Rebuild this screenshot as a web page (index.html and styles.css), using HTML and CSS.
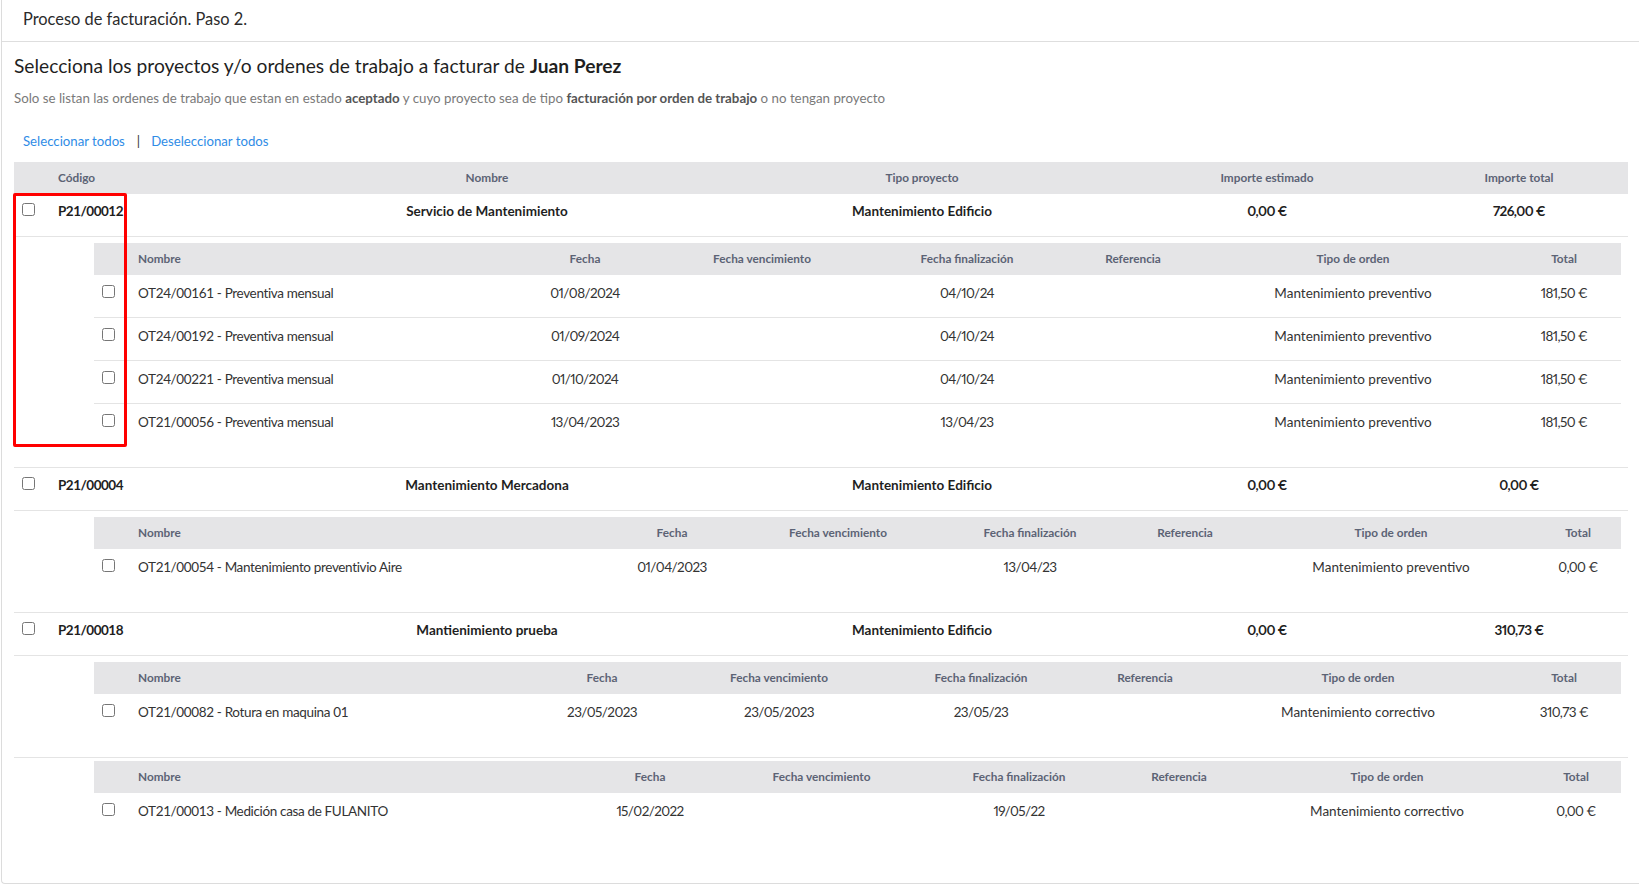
FILE: index.html
```html
<!DOCTYPE html>
<html lang="es">
<head>
<meta charset="utf-8">
<title>Proceso de facturación. Paso 2.</title>
<link rel="stylesheet" href="styles.css">
</head>
<body>
<div class="card">
  <div class="card-header">Proceso de facturación. Paso 2.</div>
  <div class="card-body">
    <h4 class="title">Selecciona los proyectos y/o ordenes de trabajo a facturar de <b>Juan Perez</b></h4>
    <p class="hint">Solo se listan las ordenes de trabajo que estan en estado <b>aceptado</b> y cuyo proyecto sea de tipo <b>facturación por orden de trabajo</b> o no tengan proyecto</p>
    <div class="actions"><a href="#">Seleccionar todos</a><span class="sep">|</span><a href="#">Deseleccionar todos</a></div>

    <table class="projects">
      <colgroup><col class="pc0"><col class="pc1"><col class="pc2"><col class="pc3"><col class="pc4"><col class="pc5"></colgroup>
      <thead>
        <tr><th></th><th class="l">Código</th><th>Nombre</th><th>Tipo proyecto</th><th>Importe estimado</th><th>Importe total</th></tr>
      </thead>
      <tbody>
        <tr class="proj"><td><input type="checkbox"></td><td class="l code">P21/00012</td><td>Servicio de Mantenimiento</td><td>Mantenimiento Edificio</td><td class="num">0,00 €</td><td class="num">726,00 €</td></tr>
        <tr class="sub"><td colspan="6">
          <table class="orders oa">
            <colgroup><col class="c0"><col class="c1"><col class="c2"><col class="c3"><col class="c4"><col class="c5"><col class="c6"><col class="c7"></colgroup>
            <thead><tr><th></th><th class="l">Nombre</th><th>Fecha</th><th>Fecha vencimiento</th><th>Fecha finalización</th><th>Referencia</th><th>Tipo de orden</th><th>Total</th></tr></thead>
            <tbody>
              <tr><td><input type="checkbox"></td><td class="l name">OT24/00161 - Preventiva mensual</td><td class="num">01/08/2024</td><td class="num"></td><td class="num">04/10/24</td><td></td><td>Mantenimiento preventivo</td><td class="num">181,50 €</td></tr>
              <tr><td><input type="checkbox"></td><td class="l name">OT24/00192 - Preventiva mensual</td><td class="num">01/09/2024</td><td class="num"></td><td class="num">04/10/24</td><td></td><td>Mantenimiento preventivo</td><td class="num">181,50 €</td></tr>
              <tr><td><input type="checkbox"></td><td class="l name">OT24/00221 - Preventiva mensual</td><td class="num">01/10/2024</td><td class="num"></td><td class="num">04/10/24</td><td></td><td>Mantenimiento preventivo</td><td class="num">181,50 €</td></tr>
              <tr><td><input type="checkbox"></td><td class="l name">OT21/00056 - Preventiva mensual</td><td class="num">13/04/2023</td><td class="num"></td><td class="num">13/04/23</td><td></td><td>Mantenimiento preventivo</td><td class="num">181,50 €</td></tr>
            </tbody>
          </table>
        </td></tr>

        <tr class="proj"><td><input type="checkbox"></td><td class="l code">P21/00004</td><td>Mantenimiento Mercadona</td><td>Mantenimiento Edificio</td><td class="num">0,00 €</td><td class="num">0,00 €</td></tr>
        <tr class="sub"><td colspan="6">
          <table class="orders ob">
            <colgroup><col class="c0"><col class="c1"><col class="c2"><col class="c3"><col class="c4"><col class="c5"><col class="c6"><col class="c7"></colgroup>
            <thead><tr><th></th><th class="l">Nombre</th><th>Fecha</th><th>Fecha vencimiento</th><th>Fecha finalización</th><th>Referencia</th><th>Tipo de orden</th><th>Total</th></tr></thead>
            <tbody>
              <tr><td><input type="checkbox"></td><td class="l name">OT21/00054 - Mantenimiento preventivio Aire</td><td class="num">01/04/2023</td><td class="num"></td><td class="num">13/04/23</td><td></td><td>Mantenimiento preventivo</td><td class="num">0,00 €</td></tr>
            </tbody>
          </table>
        </td></tr>

        <tr class="proj"><td><input type="checkbox"></td><td class="l code">P21/00018</td><td>Mantienimiento prueba</td><td>Mantenimiento Edificio</td><td class="num">0,00 €</td><td class="num">310,73 €</td></tr>
        <tr class="sub"><td colspan="6">
          <table class="orders oc">
            <colgroup><col class="c0"><col class="c1"><col class="c2"><col class="c3"><col class="c4"><col class="c5"><col class="c6"><col class="c7"></colgroup>
            <thead><tr><th></th><th class="l">Nombre</th><th>Fecha</th><th>Fecha vencimiento</th><th>Fecha finalización</th><th>Referencia</th><th>Tipo de orden</th><th>Total</th></tr></thead>
            <tbody>
              <tr><td><input type="checkbox"></td><td class="l name">OT21/00082 - Rotura en maquina 01</td><td class="num">23/05/2023</td><td class="num">23/05/2023</td><td class="num">23/05/23</td><td></td><td>Mantenimiento correctivo</td><td class="num">310,73 €</td></tr>
            </tbody>
          </table>
        </td></tr>

        <tr class="sub loose"><td colspan="6">
          <table class="orders od">
            <colgroup><col class="c0"><col class="c1"><col class="c2"><col class="c3"><col class="c4"><col class="c5"><col class="c6"><col class="c7"></colgroup>
            <thead><tr><th></th><th class="l">Nombre</th><th>Fecha</th><th>Fecha vencimiento</th><th>Fecha finalización</th><th>Referencia</th><th>Tipo de orden</th><th>Total</th></tr></thead>
            <tbody>
              <tr><td><input type="checkbox"></td><td class="l name">OT21/00013 - Medición casa de FULANITO</td><td class="num">15/02/2022</td><td class="num"></td><td class="num">19/05/22</td><td></td><td>Mantenimiento correctivo</td><td class="num">0,00 €</td></tr>
            </tbody>
          </table>
        </td></tr>
      </tbody>
    </table>
  </div>
</div>
<div class="highlight"></div>
</body>
</html>
```

FILE: styles.css
```css
* { box-sizing: border-box; }

html, body {
  margin: 0;
  padding: 0;
  background: #ffffff;
}

body {
  font-family: Lato, "Open Sans", "Liberation Sans", sans-serif;
  font-size: 13.5px;
  line-height: 20px;
  color: #333333;
  position: relative;
  width: 1639px;
  height: 885px;
  overflow: hidden;
}

.card {
  margin-left: 1px;
  height: 884px;
  border-left: 1px solid #dcdcdc;
  border-bottom: 1px solid #dcdcdc;
  border-bottom-left-radius: 4px;
  background: #fff;
}

.card-header {
  padding: 7px 21px 10px;
  font-size: 16.4px;
  line-height: 24px;
  color: #2b2b2b;
  border-bottom: 1px solid #dedede;
}

.card-body {
  padding: 10px 11px 0 12px;
}

.title {
  margin: 0;
  font-size: 19.2px;
  line-height: 28px;
  font-weight: 400;
  color: #1f1f1f;
}
.title b { font-weight: 700; }

.hint {
  margin: 8px 0 0;
  font-size: 13.3px;
  line-height: 20px;
  color: #7a7a7a;
}
.hint b { color: #555; font-weight: 700; }

.actions {
  margin: 23px 0 0 9px;
  display: flex;
  align-items: center;
  font-size: 13.2px;
  line-height: 20px;
}
.actions a {
  color: #2f8ce6;
  text-decoration: none;
}
.actions .sep {
  color: #333;
  margin: 0 11px 0 12px;
}

table {
  border-collapse: collapse;
  table-layout: fixed;
  width: 100%;
}

.projects { margin-top: 11px; }

th {
  background: #e5e5e7;
  color: #5c6375;
  font-size: 11.8px;
  font-weight: 700;
  line-height: 20px;
  padding: 6px 8px;
  text-align: center;
  white-space: nowrap;
}

td {
  padding: 8px 8px 14px;
  text-align: center;
  vertical-align: top;
  white-space: nowrap;
}

th.l, td.l { text-align: left; }

td.num {
  font-variant-numeric: proportional-nums;
  letter-spacing: -0.6px;
}
td.name { letter-spacing: -0.35px; }
td.code { letter-spacing: -0.5px; }

input[type="checkbox"] {
  display: block;
  width: 13px;
  height: 13px;
  margin: 2px 0 0;
}

.proj td {
  padding-top: 7px;
  padding-bottom: 15px;
  font-weight: 700;
  color: #1f1f1f;
  border-bottom: 1px solid #e4e4e4;
}
.proj td input[type="checkbox"] { margin-top: 2px; }

.sub > td {
  padding: 6px 7px 21px 80px;
  border-bottom: 1px solid #e4e4e4;
  letter-spacing: 0;
}
.sub.loose > td {
  padding-top: 3px;
  border-bottom: none;
}

.orders td {
  color: #333;
  border-bottom: 1px solid #e4e4e4;
}
.orders tbody tr:last-child td { border-bottom: none; }

/* main table columns */
.pc0 { width: 36px; }
.pc1 { width: 204px; }
.pc2 { width: 466px; }
.pc3 { width: 404px; }
.pc4 { width: 286px; }
.pc5 { width: 218px; }

/* order sub-table columns */
.orders .c0 { width: 36px; }

.oa .c1 { width: 383px; }
.oa .c2 { width: 144px; }
.oa .c3 { width: 210px; }
.oa .c4 { width: 200px; }
.oa .c5 { width: 132px; }
.oa .c6 { width: 308px; }
.oa .c7 { width: 114px; }

.ob .c1 { width: 475px; }
.ob .c2 { width: 134px; }
.ob .c3 { width: 198px; }
.ob .c4 { width: 186px; }
.ob .c5 { width: 124px; }
.ob .c6 { width: 288px; }
.ob .c7 { width: 86px; }

.oc .c1 { width: 397px; }
.oc .c2 { width: 150px; }
.oc .c3 { width: 204px; }
.oc .c4 { width: 200px; }
.oc .c5 { width: 128px; }
.oc .c6 { width: 298px; }
.oc .c7 { width: 114px; }

.od .c1 { width: 450px; }
.od .c2 { width: 140px; }
.od .c3 { width: 203px; }
.od .c4 { width: 192px; }
.od .c5 { width: 128px; }
.od .c6 { width: 288px; }
.od .c7 { width: 90px; }

.highlight {
  position: absolute;
  left: 13px;
  top: 193px;
  width: 114px;
  height: 254px;
  border: 3px solid #ff0000;
  border-radius: 2px;
  pointer-events: none;
}
```
